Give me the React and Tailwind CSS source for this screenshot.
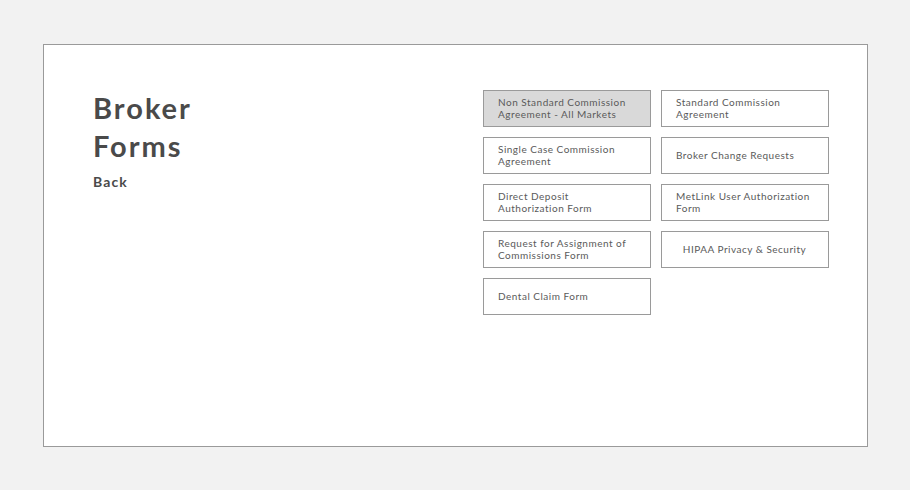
export default function App() {
  const forms = [
    { label: "Non Standard Commission Agreement - All Markets", active: true },
    { label: "Standard Commission Agreement" },
    { label: "Single Case Commission Agreement" },
    { label: "Broker Change Requests" },
    { label: "Direct Deposit Authorization Form" },
    { label: "MetLink User Authorization Form" },
    { label: "Request for Assignment of Commissions Form" },
    { label: "HIPAA Privacy & Security", center: true },
    { label: "Dental Claim Form" },
  ];

  return (
    <div
      className="min-h-[490px] w-[910px] bg-[#f2f2f2] pt-[44px] pl-[43px]"
      style={{ fontFamily: "Lato, 'Liberation Sans', sans-serif" }}
    >
      <div className="flex h-[403px] w-[825px] border border-[#9a9a9a] bg-white pl-[49px] pt-[45px]">
        <div className="w-[390px] -mt-[1px]">
          <h1 className="text-[29px] font-bold leading-[38px] tracking-[2px] text-[#4a4a4a]">
            Broker
            <br />
            Forms
          </h1>
          <div className="mt-[8px] text-[14px] font-bold leading-[18px] tracking-[1.1px] text-[#4a4a4a]">
            Back
          </div>
        </div>
        <div className="grid h-fit grid-cols-[168px_168px] gap-x-[10px] gap-y-[10px]">
          {forms.map((f) => (
            <div
              key={f.label}
              className={`flex h-[37px] items-center border border-[#9a9a9a] pb-[1px] pl-[14px] pr-[15px] text-[10px] leading-[12px] tracking-[0.5px] text-[#5a5a5a] ${
                f.active ? "bg-[#d9d9d9]" : "bg-white"
              } ${f.center ? "justify-center text-center" : ""}`}
            >
              <span>{f.label}</span>
            </div>
          ))}
        </div>
      </div>
    </div>
  );
}
